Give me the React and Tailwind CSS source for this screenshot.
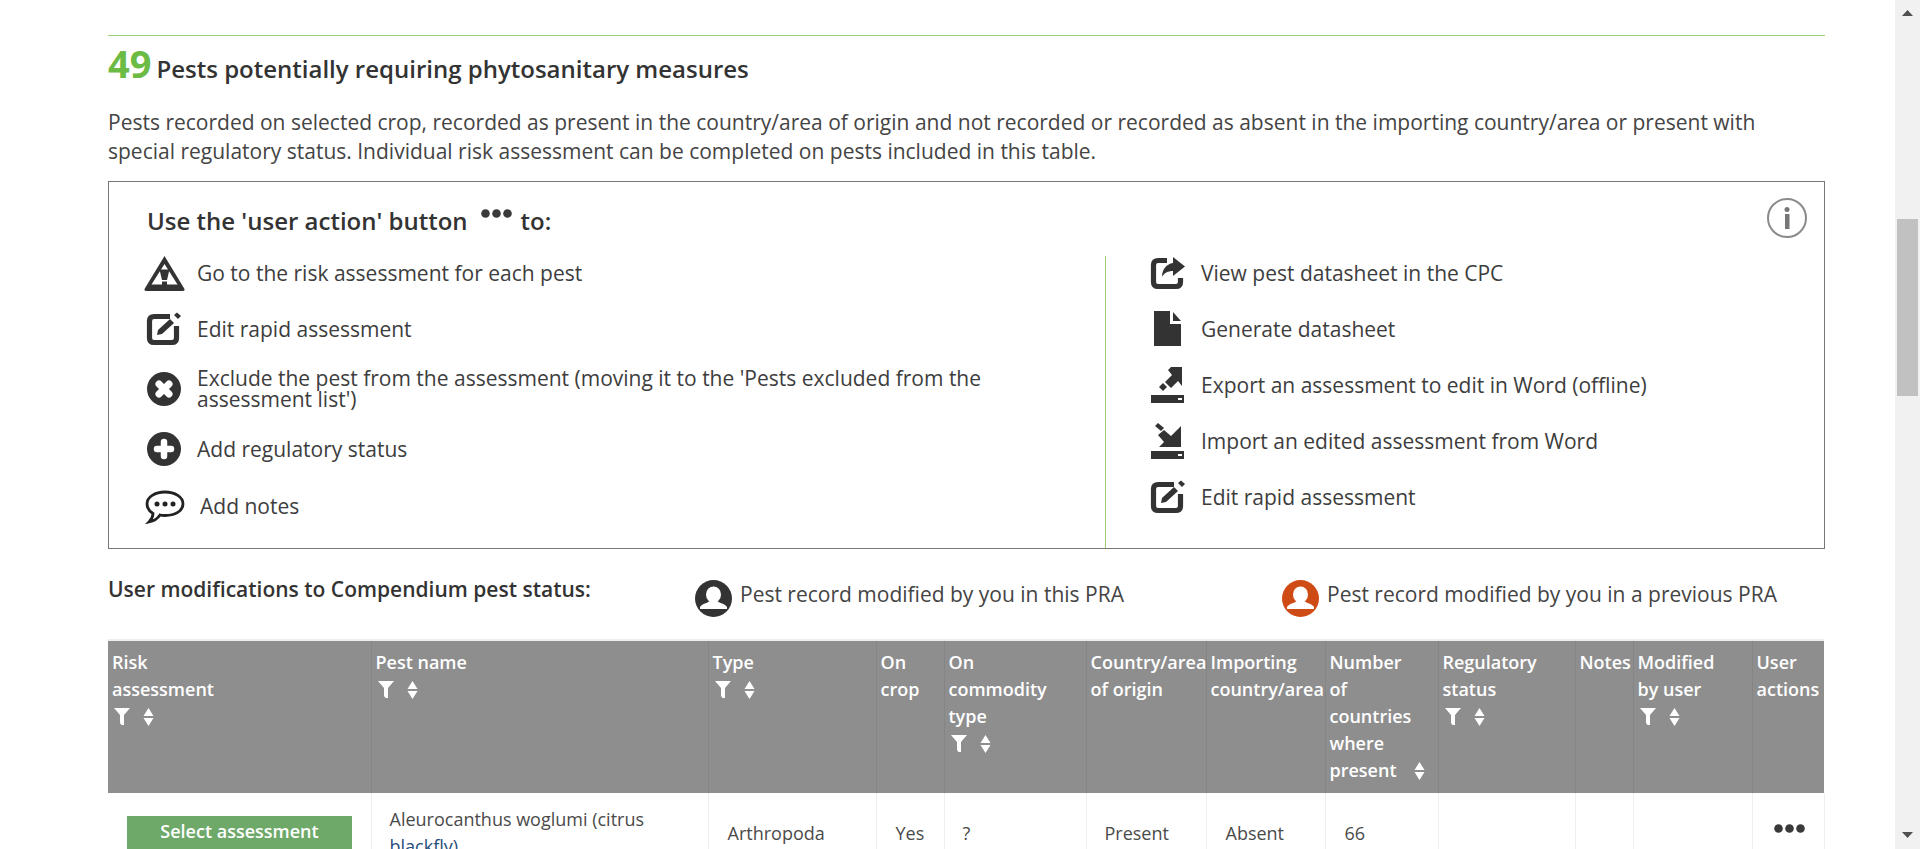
const font = "font-['Open_Sans',sans-serif]";

const ic = "#333333";

function Triangle() {
  return (
    <svg width="41" height="35" viewBox="0 0 41 35">
      <path fillRule="evenodd" fill={ic} d="M20.5 0 L40.5 33 Q41 35 39 35 H2 Q0 35 0.5 33 Z M20.5 8 L7.5 28.5 H33.5 Z" />
      <path fill={ic} d="M15.5 13.5 H25.5 L23 24 H18 Z" />
      <path fill={ic} d="M18 25.5 H23 V29.5 H18 Z" />
    </svg>
  );
}
function EditIcon() {
  return (
    <svg width="36" height="34" viewBox="0 0 36 34">
      <path fill="none" stroke={ic} strokeWidth="5.2" d="M24 4.5 H8 Q3.5 4.5 3.5 9 V26 Q3.5 30.5 8 30.5 H26 Q30.5 30.5 30.5 26 V14" />
      <path fill={ic} d="M11 23 L12 18 L24 7 L28 11 L16 22 Z" />
      <path fill={ic} d="M28 3 L31 0.5 L35 4 L32 7 Z" />
    </svg>
  );
}
function CrossCircle() {
  return (
    <svg width="34" height="34" viewBox="0 0 34 34">
      <circle cx="17" cy="17" r="17" fill={ic} />
      <path stroke="#fff" strokeWidth="7" strokeLinecap="round" d="M12 12 L22 22 M22 12 L12 22" />
    </svg>
  );
}
function PlusCircle() {
  return (
    <svg width="34" height="34" viewBox="0 0 34 34">
      <circle cx="17" cy="17" r="17" fill={ic} />
      <path stroke="#fff" strokeWidth="6.5" strokeLinecap="round" d="M17 10 V24 M10 17 H24" />
    </svg>
  );
}
function Chat() {
  return (
    <svg width="40" height="34" viewBox="0 0 40 34">
      <path fill="#fff" stroke="#222" strokeWidth="2.8" d="M20 2 C30 2 38 7 38 14 C38 21 30 25.5 20 25.5 C18 25.5 16 25.3 15 25 C13 28 9 31 4 32 C6 30 8 27 8 23.5 C4 21 2 18 2 14 C2 7 10 2 20 2 Z" />
      <circle cx="12" cy="14" r="2.5" fill="#222" />
      <circle cx="20" cy="14" r="2.5" fill="#222" />
      <circle cx="28" cy="14" r="2.5" fill="#222" />
    </svg>
  );
}
function ShareIcon() {
  return (
    <svg width="36" height="34" viewBox="0 0 36 34">
      <path fill="none" stroke={ic} strokeWidth="5.2" d="M17 4.5 H8 Q3.5 4.5 3.5 9 V26 Q3.5 30.5 8 30.5 H26 Q30.5 30.5 30.5 26 V22" />
      <path fill={ic} d="M23 1 L35 10.5 L23 20 V15 C18 15 14 17 12 21 C12 14 16 8 23 7 Z" />
    </svg>
  );
}
function FileIcon() {
  return (
    <svg width="28" height="36" viewBox="0 0 28 36">
      <path fill={ic} d="M0 0 H16 V13 H27 V35 H0 Z" />
      <path fill={ic} d="M19 1 L27 10 H19 Z" />
    </svg>
  );
}
function ExportIcon() {
  return (
    <svg width="34" height="36" viewBox="0 0 34 36">
      <path fill={ic} d="M20 0 H31 V19 L27 14 L20 21 L14 15 L21 8 L17 3 Z" />
      <path fill={ic} d="M8 20 L12 16 L16 20 L12 24 Z" />
      <path fillRule="evenodd" fill={ic} d="M0 28 H33 V36 H0 Z M27 31 V33 H31 V31 Z" />
    </svg>
  );
}
function ImportIcon() {
  return (
    <svg width="34" height="36" viewBox="0 0 34 36">
      <path fill={ic} d="M30 3 V24 H8 L13 19 L7 12 L13 7 L20 13 L25 8 Z" />
      <path fill={ic} d="M4 3 L7 0 L13 5 L10 8 Z" />
      <path fillRule="evenodd" fill={ic} d="M0 28 H33 V36 H0 Z M27 31 V33 H31 V31 Z" />
    </svg>
  );
}
function Dots({ cls }) {
  return (
    <svg className={cls} width="31" height="9" viewBox="0 0 31 9">
      <circle cx="4.5" cy="4.5" r="4.3" fill="#3a3a3a" />
      <circle cx="15.5" cy="4.5" r="4.3" fill="#3a3a3a" />
      <circle cx="26.5" cy="4.5" r="4.3" fill="#3a3a3a" />
    </svg>
  );
}
function UserBadge({ color }) {
  return (
    <svg className="shrink-0" width="37" height="37" viewBox="0 0 37 37">
      <circle cx="18.5" cy="18.5" r="18.5" fill={color} />
      <ellipse cx="18.5" cy="14.5" rx="7.5" ry="8" fill="#fff" />
      <path fill="#fff" d="M15 20 C15 23 7 23 5 27 V29 H32 V27 C30 23 22 23 22 20 Z" />
    </svg>
  );
}
function InfoIcon() {
  return (
    <svg width="40" height="40" viewBox="0 0 40 40">
      <circle cx="20" cy="20" r="19" fill="#fff" stroke="#8a8a8a" strokeWidth="2" />
      <circle cx="20" cy="11.5" r="2.5" fill="#777" />
      <rect x="18" y="16" width="4.5" height="15" fill="#777" />
    </svg>
  );
}
function Filter() {
  return (
    <svg className="shrink-0" width="16" height="17" viewBox="0 0 16 17">
      <path fill="#fff" d="M0 0 H16 L10 7 V17 H7.5 L6 15 V7 Z" />
    </svg>
  );
}
function Sort() {
  return (
    <svg className="shrink-0" width="11" height="18" viewBox="0 0 11 18">
      <path fill="#fff" d="M5.5 0 L10.5 8 H0.5 Z M0.5 10 H10.5 L5.5 18 Z" />
    </svg>
  );
}

function Item({ icon, children, tw = "w-[42px]", gap = "" }) {
  return (
    <div className="flex items-center">
      <div className={`shrink-0 flex justify-center ${tw}`}>{icon}</div>
      <div className={`text-[21px] leading-[21px] text-[#3d3d3d] ${gap}`}>{children}</div>
    </div>
  );
}

function Th({ w, children, icons }) {
  return (
    <th className={`${w} align-top text-left font-semibold text-[18px] leading-[27px] text-white pl-[4px] pt-[8px] whitespace-nowrap border-r border-[#858585] last:border-r-0`}>
      {children}
      {icons && (
        <span className="flex items-center gap-[13px] h-[27px] pl-[2px]">
          <Filter />
          <Sort />
        </span>
      )}
    </th>
  );
}

function Td({ children, cls = "" }) {
  return (
    <td className={`align-top text-[18px] leading-[27px] text-[#4a4a4a] border-r border-[#eeeeee] ${cls}`}>
      {children}
    </td>
  );
}

export default function App() {
  return (
    <div className={`${font} flex h-[849px] w-full overflow-hidden bg-white`}>
      <div className="flex-1 min-w-0 pl-[108px] pr-[70px] pt-[35px]">
        <div className="border-t border-[#9bd070] h-[5px]" />
        <div className="flex items-baseline text-[#333] h-[47px]">
          <span className="font-bold text-[38px] leading-[47px] text-[#6cbb45] mr-[5px]">49</span>
          <span className="font-semibold text-[24px] leading-[47px]">Pests potentially requiring phytosanitary measures</span>
        </div>
        <p className="mt-[21px] text-[21px] leading-[29px] text-[#444]">
          Pests recorded on selected crop, recorded as present in the country/area of origin and not recorded or recorded as absent in the importing country/area or present with special regulatory status. Individual risk assessment can be completed on pests included in this table.
        </p>
        <div className="relative mt-[15px] border border-[#777] h-[368px]">
          <div className="absolute right-[17px] top-[16px]"><InfoIcon /></div>
          <div className="pl-[38px] pt-[21px] flex items-center font-semibold text-[24px] leading-[36px] text-[#333]">
            <span>Use the 'user action' button</span>
            <Dots cls="ml-[13px] mr-[9px] -mt-[16px]" />
            <span>to:</span>
          </div>
          <div className="flex mt-[7px] pl-[34px]">
            <div className="w-[962px] flex flex-col">
              <div className="h-[55px] flex items-center"><Item icon={<Triangle />} gap="ml-[12px]">Go to the risk assessment for each pest</Item></div>
              <div className="h-[56px] flex items-center"><Item icon={<EditIcon />} gap="ml-[12px]">Edit rapid assessment</Item></div>
              <div className="h-[64px] flex items-center"><Item icon={<CrossCircle />} gap="ml-[12px] w-[800px]">Exclude the pest from the assessment (moving it to the 'Pests excluded from the assessment list')</Item></div>
              <div className="h-[56px] flex items-center"><Item icon={<PlusCircle />} gap="ml-[12px]">Add regulatory status</Item></div>
              <div className="h-[59px] flex items-center"><Item icon={<Chat />} tw="w-[42px] pl-[2px]" gap="ml-[15px]">Add notes</Item></div>
            </div>
            <div className="mt-[10px] border-l border-[#9bd070] pl-[44px] flex flex-col gap-[22px] h-[292px]">
              <div className="h-[34px] flex items-center"><Item icon={<ShareIcon />} tw="w-[36px]" gap="ml-[15px]">View pest datasheet in the CPC</Item></div>
              <div className="h-[34px] flex items-center"><Item icon={<FileIcon />} tw="w-[36px]" gap="ml-[15px]">Generate datasheet</Item></div>
              <div className="h-[34px] flex items-center"><Item icon={<ExportIcon />} tw="w-[36px]" gap="ml-[15px]">Export an assessment to edit in Word (offline)</Item></div>
              <div className="h-[34px] flex items-center"><Item icon={<ImportIcon />} tw="w-[36px]" gap="ml-[15px]">Import an edited assessment from Word</Item></div>
              <div className="h-[34px] flex items-center"><Item icon={<EditIcon />} tw="w-[36px]" gap="ml-[15px]">Edit rapid assessment</Item></div>
            </div>
          </div>
        </div>
        <div className="flex h-[90px] pt-[31px] text-[#333]">
          <div className="w-[587px] -mt-[4px] font-semibold text-[21px] leading-[26px] whitespace-nowrap">User modifications to Compendium pest status:</div>
          <div className="flex items-start w-[587px] gap-[8px] text-[21px] leading-[28px] text-[#444]"><UserBadge color="#333333" /><span className="whitespace-nowrap">Pest record modified by you in this PRA</span></div>
          <div className="flex items-start gap-[8px] text-[21px] leading-[28px] text-[#444]"><UserBadge color="#cf4b16" /><span className="whitespace-nowrap">Pest record modified by you in a previous PRA</span></div>
        </div>
        <table className="table-fixed border-t-2 border-[#eeeeee] w-[1716px] border-collapse">
          <thead>
            <tr className="bg-[#8e8e8e] h-[153px]">
              <Th w="w-[263px]" icons>Risk<br />assessment</Th>
              <Th w="w-[337px]" icons>Pest name</Th>
              <Th w="w-[168px]" icons>Type</Th>
              <Th w="w-[68px]">On<br />crop</Th>
              <Th w="w-[142px]" icons>On<br />commodity<br />type</Th>
              <Th w="w-[120px]">Country/area<br />of origin</Th>
              <Th w="w-[119px]">Importing<br />country/area</Th>
              <Th w="w-[113px]">
                Number<br />of<br />countries<br />where
                <span className="flex items-center gap-[17px]">present <Sort /></span>
              </Th>
              <Th w="w-[137px]" icons>Regulatory<br />status</Th>
              <Th w="w-[58px]">Notes</Th>
              <Th w="w-[119px]" icons>Modified<br />by user</Th>
              <Th w="w-[72px]">User<br />actions</Th>
            </tr>
          </thead>
          <tbody>
            <tr>
              <Td cls="pt-[23px]">
                <div className="ml-[19px] w-[225px] h-[40px] bg-[#6fa96a] text-white font-semibold text-center leading-[30px]">Select assessment</div>
              </Td>
              <Td cls="pl-[18px] pr-[10px] pt-[13px]">Aleurocanthus woglumi (citrus <span className="text-[#1f4e79]">blackfly)</span></Td>
              <Td cls="pl-[19px] pt-[27px]">Arthropoda</Td>
              <Td cls="pl-[19px] pt-[27px]">Yes</Td>
              <Td cls="pl-[18px] pt-[27px]">?</Td>
              <Td cls="pl-[18px] pt-[27px]">Present</Td>
              <Td cls="pl-[19px] pt-[27px]">Absent</Td>
              <Td cls="pl-[19px] pt-[27px]">66</Td>
              <Td />
              <Td />
              <Td />
              <Td cls="pt-[31px] pl-[21px]"><Dots /></Td>
            </tr>
          </tbody>
        </table>
      </div>
      <div className="w-[25px] shrink-0 bg-[#f1f1f1] flex flex-col items-center">
        <svg className="mt-[10px] shrink-0" width="11" height="6" viewBox="0 0 11 6"><path fill="#505050" d="M5.5 0 L11 6 H0 Z" /></svg>
        <div className="mt-[203px] w-[21px] h-[177px] bg-[#c1c1c1] shrink-0" />
        <svg className="mt-auto mb-[11px] shrink-0" width="11" height="6" viewBox="0 0 11 6"><path fill="#505050" d="M0 0 H11 L5.5 6 Z" /></svg>
      </div>
    </div>
  );
}
